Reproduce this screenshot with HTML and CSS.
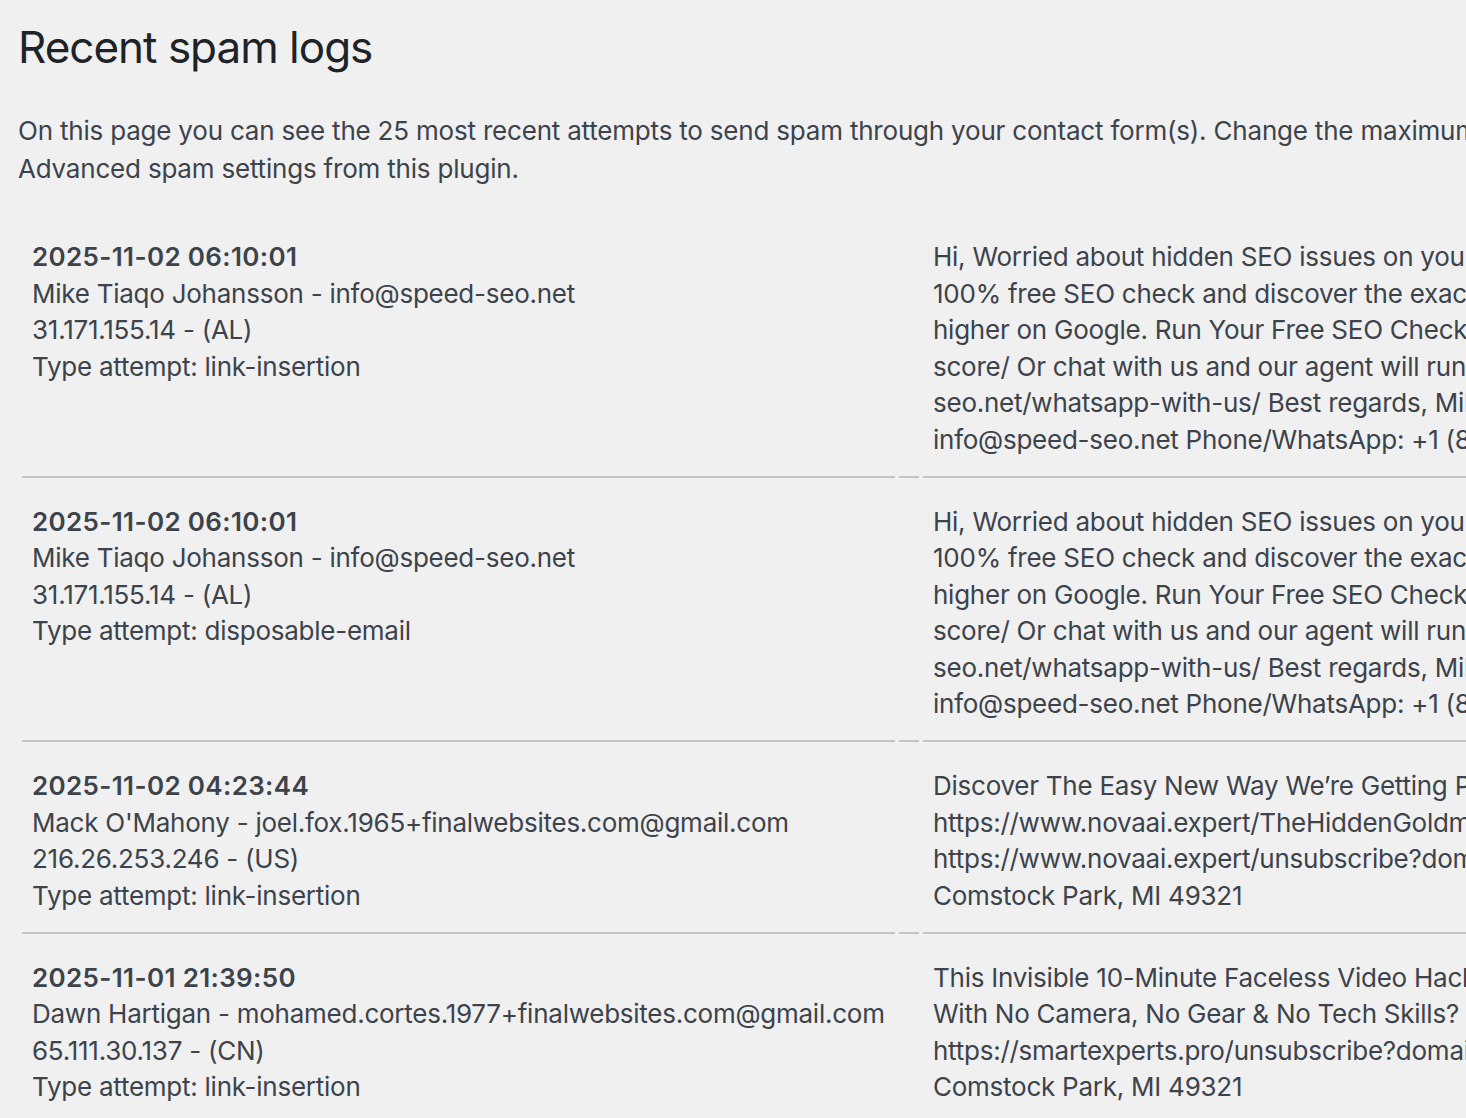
FILE: index.html
```html
<!DOCTYPE html>
<html lang="en">
<head>
<meta charset="utf-8">
<title>Recent spam logs</title>
<link rel="stylesheet" href="styles.css">
</head>
<body>
<div class="wrap">
  <h1 class="title">Recent spam logs</h1>
  <p class="intro">On this page you can see the 25 most recent attempts to send spam through your contact form(s). Change the maximum number of log entries via the<br>Advanced spam settings from this plugin.</p>
  <table class="logs">
    <tbody>
      <tr>
        <td class="meta">
          <strong class="date">2025-11-02 06:10:01</strong><br>
          Mike Tiaqo Johansson - info@speed-seo.net<br>
          31.171.155.14 - (AL)<br>
          Type attempt: link-insertion
        </td>
        <td class="spacer"></td>
        <td class="message">Hi, Worried about hidden SEO issues on your website? Let us help you — completely free. Run a<br>100% free SEO check and discover the exact problems holding your site back from ranking<br>higher on Google. Run Your Free SEO Check Now: https://www.speed-seo.net/check-site-seo-<br>score/ Or chat with us and our agent will run the report for you: https://www.speed-<br>seo.net/whatsapp-with-us/ Best regards, Mike Tiaqo Johansson Speed SEO Digital Email:<br>info@speed-seo.net Phone/WhatsApp: +1 (833) 454-8622</td>
      </tr>
      <tr>
        <td class="meta">
          <strong class="date">2025-11-02 06:10:01</strong><br>
          Mike Tiaqo Johansson - info@speed-seo.net<br>
          31.171.155.14 - (AL)<br>
          Type attempt: disposable-email
        </td>
        <td class="spacer"></td>
        <td class="message">Hi, Worried about hidden SEO issues on your website? Let us help you — completely free. Run a<br>100% free SEO check and discover the exact problems holding your site back from ranking<br>higher on Google. Run Your Free SEO Check Now: https://www.speed-seo.net/check-site-seo-<br>score/ Or chat with us and our agent will run the report for you: https://www.speed-<br>seo.net/whatsapp-with-us/ Best regards, Mike Tiaqo Johansson Speed SEO Digital Email:<br>info@speed-seo.net Phone/WhatsApp: +1 (833) 454-8622</td>
      </tr>
      <tr>
        <td class="meta">
          <strong class="date">2025-11-02 04:23:44</strong><br>
          Mack O'Mahony - joel.fox.1965+finalwebsites.com@gmail.com<br>
          216.26.253.246 - (US)<br>
          Type attempt: link-insertion
        </td>
        <td class="spacer"></td>
        <td class="message">Discover The Easy New Way We’re Getting Paid Daily With AI In Minutes? Watch Here:<br>https://www.novaai.expert/TheHiddenGoldmine Unsubscribe here:<br>https://www.novaai.expert/unsubscribe?domain=finalwebsites.com Address: 4155 Alpine Ave NW,<br>Comstock Park, MI 49321</td>
      </tr>
      <tr>
        <td class="meta">
          <strong class="date">2025-11-01 21:39:50</strong><br>
          Dawn Hartigan - mohamed.cortes.1977+finalwebsites.com@gmail.com<br>
          65.111.30.137 - (CN)<br>
          Type attempt: link-insertion
        </td>
        <td class="spacer"></td>
        <td class="message">This Invisible 10-Minute Faceless Video Hack Is Making People Money Online Every Day...<br>With No Camera, No Gear &amp; No Tech Skills? Watch: https://smartexperts.pro/faceless<br>https://smartexperts.pro/unsubscribe?domain=finalwebsites.com Address: 4155 Alpine Ave NW,<br>Comstock Park, MI 49321</td>
      </tr>
    </tbody>
  </table>
</div>
</body>
</html>
```

FILE: styles.css
```css
html, body {
  margin: 0;
  padding: 0;
  background: #f0f0f1;
  overflow: hidden;
}

body {
  font-family: Inter, "Liberation Sans", Arial, sans-serif;
  font-size: 26px;
  line-height: 36.5px;
  color: #3c434a;
  letter-spacing: -0.25px;
}

.wrap {
  padding: 17px 0 0 18px;
}

.title {
  margin: 0;
  font-size: 44px;
  font-weight: 400;
  line-height: 60px;
  letter-spacing: -1px;
  color: #1d2327;
}

.intro {
  margin: 35px 0 0;
  line-height: 38px;
  letter-spacing: -0.2px;
  white-space: nowrap;
}

.logs {
  margin-top: 25px;
  border-collapse: separate;
  border-spacing: 4px;
  table-layout: fixed;
  width: 2300px;
}

.logs td {
  vertical-align: top;
  padding: 22px 10px 17.5px;
  border-bottom: 2px solid #c3c4c7;
  white-space: nowrap;
  overflow: visible;
}

.logs tr:last-child td {
  border-bottom: 0;
}

.meta {
  width: 853px;
}

.date {
  font-weight: 600;
  letter-spacing: 0.35px;
}

.spacer {
  width: 0;
}
```
